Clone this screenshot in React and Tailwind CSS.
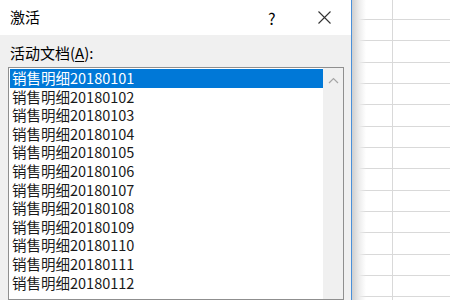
const items = [
  '销售明细20180101',
  '销售明细20180102',
  '销售明细20180103',
  '销售明细20180104',
  '销售明细20180105',
  '销售明细20180106',
  '销售明细20180107',
  '销售明细20180108',
  '销售明细20180109',
  '销售明细20180110',
  '销售明细20180111',
  '销售明细20180112',
]

const font = { fontFamily: '"Noto Sans CJK SC", "Microsoft YaHei", sans-serif' }

function Sheet() {
  const rows = Array.from({ length: 15 })
  return (
    <div className="relative flex-1 bg-white overflow-hidden">
      <div className="flex flex-col">
        <div className="h-[20px] flex border-b border-[#d9d9d9]">
          <div className="w-[41px] border-r border-[#d9d9d9]" />
        </div>
        {rows.map((_, i) => (
          <div key={i} className="h-[21.33px] flex border-b border-[#d9d9d9]">
            <div className="w-[41px] border-r border-[#d9d9d9]" />
          </div>
        ))}
      </div>
      <div className="absolute inset-y-0 left-0 w-[14px] bg-gradient-to-r from-[#cfcfcf] via-[#ececec] to-transparent" />
    </div>
  )
}

export default function App() {
  return (
    <div className="w-[450px] h-[300px] flex overflow-hidden bg-white" style={font}>
      <div className="w-[352px] h-full flex flex-col border-r border-[#4a90d9] bg-[#f0f0f0]">
        <div className="h-[35px] shrink-0 bg-white flex items-center pl-[10px] text-[15px] text-black">
          <span>激活</span>
          <span className="ml-[228px] text-[16px]">?</span>
          <svg className="ml-[42px]" width="13" height="13" viewBox="0 0 13 13">
            <path d="M0.5 0.5 L12.5 12.5 M12.5 0.5 L0.5 12.5" stroke="#333" strokeWidth="1.1" fill="none" />
          </svg>
        </div>
        <div className="flex-1 flex flex-col pl-[8px] pr-[7px]">
          <div className="h-[32px] flex items-center pl-[2px] pt-[4px] text-[15px] text-black">
            活动文档(<span className="underline underline-offset-2">A</span>):
          </div>
          <div className="flex-1 flex border border-[#8f8f8f] bg-white">
            <div className="flex-1 flex flex-col pl-[1px] pt-[1px]">
              {items.map((t, i) => (
                <div
                  key={t}
                  className={
                    i === 0
                      ? 'h-[18.6px] flex items-center pl-[2px] text-[14.5px] leading-none bg-[#0078d7] text-white'
                      : 'h-[18.6px] flex items-center pl-[2px] text-[14.5px] leading-none text-[#1a1a1a]'
                  }
                >
                  {t}
                </div>
              ))}
            </div>
            <div className="w-[20px] bg-[#f0f0f0] flex justify-center pt-[9px]">
              <svg width="11" height="7" viewBox="0 0 11 7">
                <path d="M1 6 L5.5 1.5 L10 6" stroke="#a6a6a6" strokeWidth="1.2" fill="none" />
              </svg>
            </div>
          </div>
        </div>
      </div>
      <Sheet />
    </div>
  )
}
